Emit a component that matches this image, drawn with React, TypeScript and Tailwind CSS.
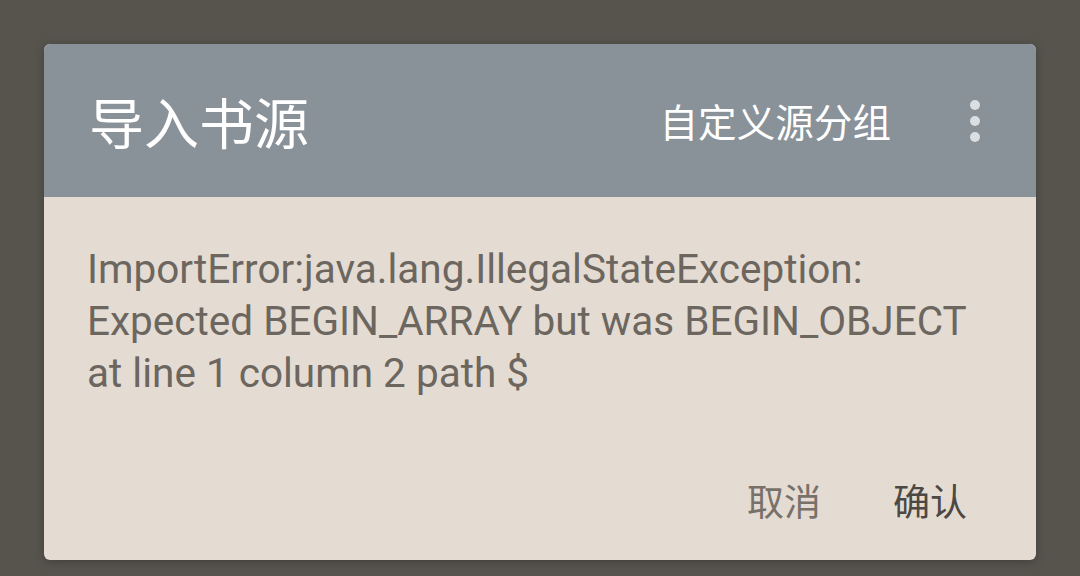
import * as React from 'react'

const cjk = '[font-family:"Noto_Sans_CJK_SC",sans-serif]'

function MoreButton() {
  return (
    <button className="flex h-[60px] w-[40px] flex-col items-center justify-center gap-[6px]">
      <span className="h-[10px] w-[10px] rounded-full bg-[#dcdfe2]" />
      <span className="h-[10px] w-[10px] rounded-full bg-[#dcdfe2]" />
      <span className="h-[10px] w-[10px] rounded-full bg-[#dcdfe2]" />
    </button>
  )
}

export default function App() {
  return (
    <div className="h-[576px] w-full bg-[#57544e] px-[44px] pt-[44px]">
      <div className="flex h-[516px] w-[992px] flex-col overflow-hidden rounded-[6px] bg-[#e4dcd3] shadow-[0_2px_10px_rgba(0,0,0,0.25)]">
        <div className="flex h-[153px] items-center bg-[#899199] pl-[45px] pr-[41px]">
          <h1 className={`${cjk} text-[55px] leading-none text-white`}>导入书源</h1>
          <div className="flex-1" />
          <span className={`${cjk} text-[38.6px] leading-none text-white`}>
            自定义源分组
          </span>
          <div className="ml-[64px]">
            <MoreButton />
          </div>
        </div>
        <div className="flex flex-1 flex-col">
          <p className="pl-[43px] pr-[20px] pt-[46px] font-['Roboto',sans-serif] text-[40.5px] leading-[52px] text-[#6c665f]">
            ImportError:java.lang.IllegalStateException:
            <br />
            Expected BEGIN_ARRAY but was BEGIN_OBJECT
            <br />
            at line 1 column 2 path $
          </p>
          <div className="flex-1" />
          <div className="mb-[20px] flex h-[80px] items-center justify-end gap-[72px] pr-[69px]">
            <button className={`${cjk} text-[37px] leading-none text-[#78716a]`}>取消</button>
            <button className={`${cjk} text-[37px] leading-none text-[#4d4843]`}>确认</button>
          </div>
        </div>
      </div>
    </div>
  )
}
